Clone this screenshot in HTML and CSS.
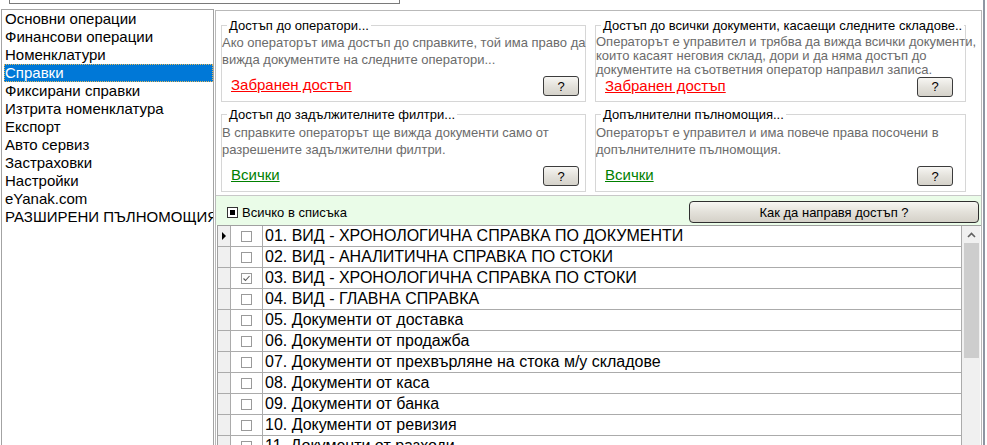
FILE: index.html
```html
<!DOCTYPE html>
<html lang="bg">
<head>
<meta charset="utf-8">
<title>Справки</title>
<link rel="stylesheet" href="styles.css">
</head>
<body>
<div class="window">
  <div class="topbar"><div class="search"></div></div>
  <div class="main">
    <ul class="menu">
      <li>Основни операции</li>
      <li>Финансови операции</li>
      <li>Номенклатури</li>
      <li class="selected">Справки</li>
      <li>Фиксирани справки</li>
      <li>Изтрита номенклатура</li>
      <li>Експорт</li>
      <li>Авто сервиз</li>
      <li>Застраховки</li>
      <li>Настройки</li>
      <li>eYanak.com</li>
      <li>РАЗШИРЕНИ ПЪЛНОМОЩИЯ</li>
    </ul>
    <section class="panel">
      <div class="groups">
        <fieldset class="group g-top g-left">
          <legend>Достъп до оператори...</legend>
          <div class="gbody">
            <p class="desc">Ако операторът има достъп до справките, той има право да<br>вижда документите на следните оператори...</p>
            <div class="actions"><a class="link deny" href="#">Забранен достъп</a><button class="qbtn" type="button">?</button></div>
          </div>
        </fieldset>
        <fieldset class="group g-top g-right">
          <legend>Достъп до всички документи, касаещи следните складове..</legend>
          <div class="gbody">
            <p class="desc tight">Операторът е управител и трябва да вижда всички документи,<br>които касаят неговия склад, дори и да няма достъп до<br>документите на съответния оператор направил записа.</p>
            <div class="actions"><a class="link deny low" href="#">Забранен достъп</a><button class="qbtn" type="button">?</button></div>
          </div>
        </fieldset>
        <fieldset class="group g-bot g-left">
          <legend>Достъп до задължителните филтри...</legend>
          <div class="gbody">
            <p class="desc">В справките операторът ще вижда документи само от<br>разрешените задължителни филтри.</p>
            <div class="actions"><a class="link all" href="#">Всички</a><button class="qbtn" type="button">?</button></div>
          </div>
        </fieldset>
        <fieldset class="group g-bot g-right">
          <legend>Допълнителни пълномощия...</legend>
          <div class="gbody">
            <p class="desc">Операторът е управител и има повече права посочени в<br>допълнителните пълномощия.</p>
            <div class="actions"><a class="link all" href="#">Всички</a><button class="qbtn" type="button">?</button></div>
          </div>
        </fieldset>
      </div>
      <div class="allbar">
        <span class="tristate"><span class="tristate-fill"></span></span>
        <span class="allbar-label">Всичко в списъка</span>
        <button class="howbtn" type="button">Как да направя достъп ?</button>
      </div>
      <div class="grid">
        <div class="rows">
          <div class="row"><span class="rh current"><span class="pointer"></span></span><span class="cb"><span class="box"></span></span><span class="txt">01. ВИД - ХРОНОЛОГИЧНА СПРАВКА ПО ДОКУМЕНТИ</span></div>
          <div class="row"><span class="rh"></span><span class="cb"><span class="box"></span></span><span class="txt">02. ВИД - АНАЛИТИЧНА СПРАВКА ПО СТОКИ</span></div>
          <div class="row"><span class="rh"></span><span class="cb"><span class="box"><svg class="tick" width="9" height="9" viewBox="0 0 9 9"><polyline points="1.5,4.5 3.5,6.5 7.5,2" fill="none" stroke="#5a5a5a" stroke-width="1.1"/></svg></span></span><span class="txt">03. ВИД - ХРОНОЛОГИЧНА СПРАВКА ПО СТОКИ</span></div>
          <div class="row"><span class="rh"></span><span class="cb"><span class="box"></span></span><span class="txt">04. ВИД - ГЛАВНА СПРАВКА</span></div>
          <div class="row"><span class="rh"></span><span class="cb"><span class="box"></span></span><span class="txt">05. Документи от доставка</span></div>
          <div class="row"><span class="rh"></span><span class="cb"><span class="box"></span></span><span class="txt">06. Документи от продажба</span></div>
          <div class="row"><span class="rh"></span><span class="cb"><span class="box"></span></span><span class="txt">07. Документи от прехвърляне на стока м/у складове</span></div>
          <div class="row"><span class="rh"></span><span class="cb"><span class="box"></span></span><span class="txt">08. Документи от каса</span></div>
          <div class="row"><span class="rh"></span><span class="cb"><span class="box"></span></span><span class="txt">09. Документи от банка</span></div>
          <div class="row"><span class="rh"></span><span class="cb"><span class="box"></span></span><span class="txt">10. Документи от ревизия</span></div>
          <div class="row"><span class="rh"></span><span class="cb"><span class="box"></span></span><span class="txt">11. Документи от разходи</span></div>
        </div>
        <div class="vscroll">
          <div class="sb-arrow"><svg width="9" height="6" viewBox="0 0 9 6"><polyline points="1,5 4.5,1.5 8,5" fill="none" stroke="#606060" stroke-width="1.6"/></svg></div>
          <div class="sb-thumb"></div>
        </div>
      </div>
    </section>
  </div>
</div>
</body>
</html>
```
FILE: styles.css
```css
* { box-sizing: border-box; }
html, body { margin: 0; padding: 0; background: #fff; }
body {
  width: 987px;
  height: 445px;
  overflow: hidden;
  font-family: "Liberation Sans", Arial, sans-serif;
  color: #000;
}
.window {
  width: 985px;
  height: 445px;
  border-right: 2px solid #8e96a2;
  display: flex;
  flex-direction: column;
}
.topbar { height: 9px; flex: none; }
.search {
  margin-left: 9px;
  width: 391px;
  height: 4px;
  border: 1px solid #7a7a7a;
  border-top: none;
}
.main { display: flex; height: 436px; flex: none; }

.menu {
  list-style: none;
  margin: 0 0 0 1px;
  padding: 0 0 0 2px;
  width: 213px;
  height: 436px;
  border: 1px solid #a3a3a3;
  border-bottom: none;
  font-size: 15px;
  overflow: hidden;
  flex: none;
}
.menu li {
  height: 18px;
  line-height: 18px;
  padding-left: 1px;
  white-space: nowrap;
  overflow: hidden;
}
.menu li.selected {
  background: #0078d7;
  color: #fff;
  outline: 1px dotted #e2b85c;
  outline-offset: -1px;
}

.panel {
  margin: 1px 0 0 1px;
  width: 767px;
  height: 435px;
  border: 1px solid #b9b9b9;
  border-bottom: none;
  display: flex;
  flex-direction: column;
  flex: none;
  background: #fff;
}
.groups {
  display: grid;
  grid-template-columns: 365px 371px;
  grid-template-rows: 84px 85px;
  column-gap: 9px;
  row-gap: 5px;
  padding: 7px 0 3px 5px;
  border-bottom: 1px solid #c8c8c8;
  flex: none;
}
.group {
  margin: 0;
  padding: 0;
  min-width: 0;
  border: 1px solid #d6d6d6;
}
.group legend {
  margin-left: 5px;
  padding: 0 2px;
  font-size: 13px;
  line-height: 15px;
  white-space: nowrap;
}
.gbody {
  display: flex;
  flex-direction: column;
  padding-top: 1px;
}
.g-top .gbody { height: 68px; }
.g-bot .gbody { height: 69px; padding-top: 2px; }
.desc {
  margin: 0;
  font-size: 13px;
  line-height: 17px;
  color: #6b6b6b;
  white-space: nowrap;
}
.desc.tight { line-height: 14px; padding-top: 0.5px; }
.actions {
  margin-top: auto;
  display: flex;
  align-items: center;
  justify-content: space-between;
  padding: 0 6px 5px 9px;
}
.g-right .actions { padding-right: 12px; }
.link {
  font-size: 15px;
  line-height: 14px;
  text-decoration: underline;
  margin-bottom: 3px;
}
.link.low { margin-bottom: 1px; }
.link.deny { color: #ff0000; }
.link.all { color: #008000; }
.qbtn {
  width: 36px;
  height: 20px;
  padding: 0;
  font-family: "Liberation Sans", Arial, sans-serif;
  font-size: 13px;
  color: #000;
  border: 1px solid #3c3c3c;
  border-radius: 3px;
  background: linear-gradient(#f7f6f3, #e4e2dc 50%, #d5d2ca);
}

.allbar {
  height: 29px;
  flex: none;
  display: flex;
  align-items: center;
  padding: 3px 2px 0 11px;
  background: #eafce8;
  font-size: 13px;
}
.tristate {
  width: 11px;
  height: 11px;
  border: 1px solid #333;
  background: #fff;
  padding: 2px;
  display: flex;
}
.tristate-fill { flex: 1; background: #000; }
.allbar-label { margin-left: 4px; }
.howbtn {
  margin-left: auto;
  width: 290px;
  height: 22px;
  padding: 0;
  font-family: "Liberation Sans", Arial, sans-serif;
  font-size: 13px;
  color: #000;
  border: 1px solid #2f2f2f;
  border-radius: 4px;
  background: linear-gradient(#f7f6f3, #e3e1da 50%, #d4d1c8);
}

.grid {
  flex: 1;
  display: flex;
  margin-left: 1px;
  border-top: 1px solid #a0a0a0;
  border-left: 1px solid #a0a0a0;
  overflow: hidden;
}
.rows { width: 744px; flex: none; }
.row {
  display: flex;
  height: 21px;
  border-bottom: 1px solid #ababab;
}
.rh {
  width: 13px;
  flex: none;
  background: #f0f0f0;
  border-right: 1px solid #ababab;
  display: flex;
  align-items: center;
  padding-left: 4px;
}
.pointer {
  width: 0;
  height: 0;
  border-left: 4px solid #000;
  border-top: 4px solid transparent;
  border-bottom: 4px solid transparent;
}
.cb {
  width: 32px;
  flex: none;
  border-right: 1px solid #ababab;
  display: flex;
  align-items: center;
  justify-content: center;
}
.box {
  width: 11px;
  height: 11px;
  border: 1px solid #9a9a9a;
  background: #fff;
  display: flex;
  align-items: center;
  justify-content: center;
}
.tick { display: block; }
.txt {
  flex: 1;
  border-right: 1px solid #ababab;
  padding-left: 2px;
  font-size: 16px;
  line-height: 20px;
  white-space: nowrap;
  overflow: hidden;
}
.vscroll {
  width: 18px;
  flex: none;
  background: #f0f0f0;
  display: flex;
  flex-direction: column;
  align-items: center;
}
.sb-arrow {
  height: 17px;
  width: 100%;
  display: flex;
  align-items: center;
  justify-content: center;
}
.sb-thumb {
  width: 15px;
  height: 115px;
  background: #cdcdcd;
}
```
